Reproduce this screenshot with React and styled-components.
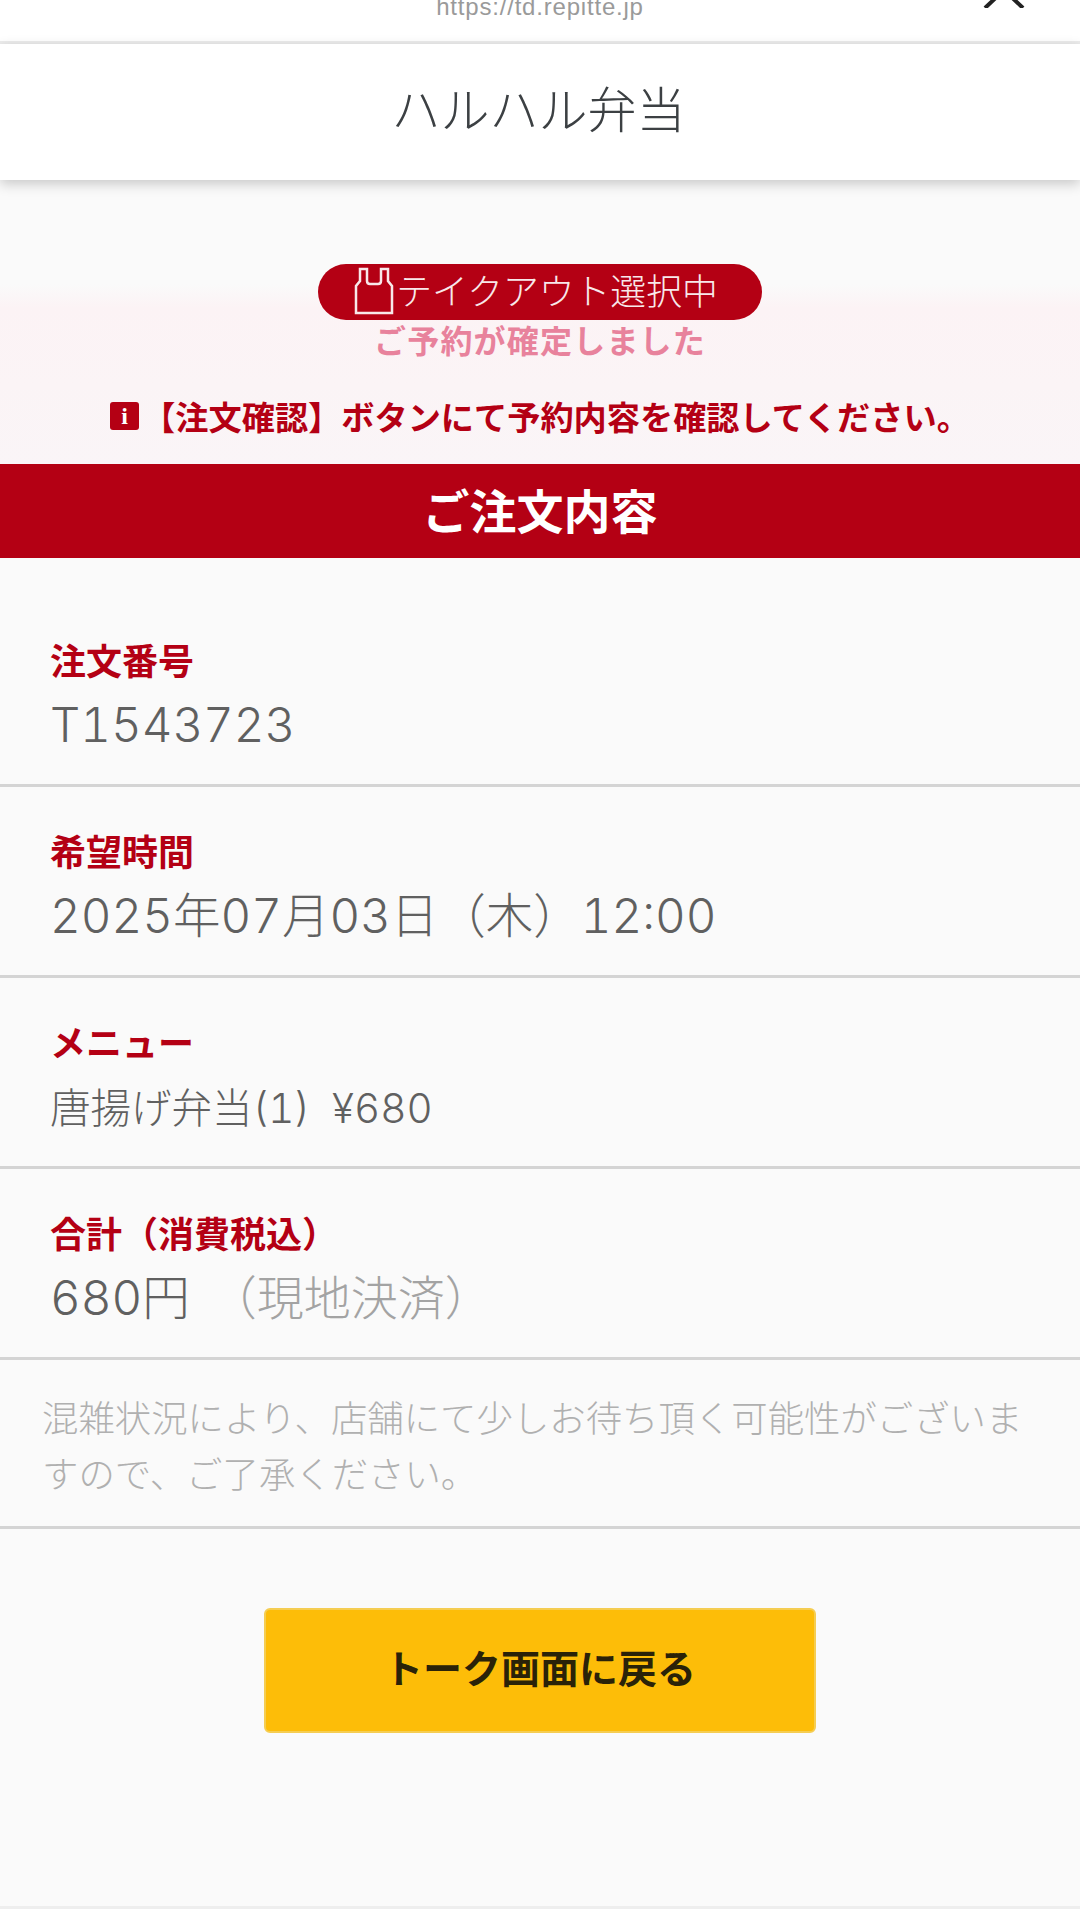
import React from "react";
import styled, { createGlobalStyle } from "styled-components";

const FONT = `"Noto Sans CJK JP", "Liberation Sans", sans-serif`;
const VALUE_FONT = `Inter, "Noto Sans CJK JP", sans-serif`;
const RED = "#b40014";

const GlobalStyle = createGlobalStyle`
  html, body {
    margin: 0;
    padding: 0;
    background: #fafafa;
  }
  * {
    box-sizing: border-box;
  }
`;

const Page = styled.div`
  width: 1080px;
  height: 1920px;
  overflow: hidden;
  display: flex;
  flex-direction: column;
  background: #fafafa;
  font-family: ${FONT};
`;

const BrowserBar = styled.div`
  height: 44px;
  background: #fff;
  border-bottom: 3px solid #ececec;
  display: flex;
  justify-content: center;
  position: relative;
  overflow: hidden;
`;

const UrlText = styled.div`
  font-family: "Liberation Sans", sans-serif;
  font-size: 24px;
  line-height: 24px;
  margin-top: -5px;
  letter-spacing: 0.8px;
  color: #9a9a9a;
`;

const CloseMark = styled.svg`
  position: absolute;
  right: 54px;
  top: -18px;
  width: 44px;
  height: 26px;
`;

const Header = styled.header`
  height: 136px;
  flex-shrink: 0;
  padding: 0 3px 11px 0;
  background: #fff;
  display: flex;
  align-items: center;
  justify-content: center;
  box-shadow: 0 4px 12px rgba(0, 0, 0, 0.2);
  position: relative;
  z-index: 1;
  font-size: 49px;
  font-weight: 300;
  color: #3c4043;
`;

const StatusArea = styled.section`
  height: 284px;
  flex-shrink: 0;
  padding-top: 84px;
  display: flex;
  flex-direction: column;
  align-items: center;
  background: linear-gradient(
    to bottom,
    #fafafa 0,
    #fafafa 104px,
    #fcf3f5 128px,
    #faf5f7 100%
  );
`;

const Pill = styled.div`
  width: 444px;
  height: 56px;
  border-radius: 28px;
  background: ${RED};
  color: #f8e8ea;
  display: flex;
  align-items: center;
  justify-content: center;
  gap: 2px;
  font-size: 35.8px;
  font-weight: 300;
  line-height: 1;
  padding-bottom: 4px;
  padding-right: 8px;
`;

const BagIcon = styled.svg`
  width: 40px;
  height: 48px;
  flex-shrink: 0;
  margin-bottom: -2px;
`;

const Confirmed = styled.div`
  margin-top: -2px;
  font-size: 32px;
  line-height: 42px;
  font-weight: 700;
  letter-spacing: 1.2px;
  color: #e8829c;
`;

const Notice = styled.div`
  margin-top: 34px;
  display: flex;
  align-items: center;
  font-size: 33.2px;
  line-height: 44px;
  font-weight: 700;
  color: ${RED};
  white-space: nowrap;
`;

const InfoBadge = styled.span`
  width: 29px;
  height: 28px;
  border-radius: 3px;
  background: ${RED};
  color: #fff;
  font-family: "Liberation Serif", serif;
  font-size: 24px;
  font-weight: 700;
  line-height: 28px;
  text-align: center;
  margin-right: 3px;
`;

const Band = styled.h2`
  margin: 0;
  height: 94px;
  flex-shrink: 0;
  padding-bottom: 5px;
  background: ${RED};
  color: #fff;
  display: flex;
  align-items: center;
  justify-content: center;
  font-size: 47px;
  font-weight: 700;
`;

const OrderList = styled.div`
  padding-top: 38px;
  display: flex;
  flex-direction: column;
`;

const Row = styled.div`
  height: 191px;
  padding: 39px 50px 0;
  border-bottom: 3px solid #d4d4d4;
`;

const Label = styled.div`
  font-size: 36px;
  line-height: 48px;
  font-weight: 700;
  color: ${RED};
`;

const Value = styled.div`
  margin-top: ${(p) => (p.$small ? "12px" : "10px")};
  font-family: ${VALUE_FONT};
  font-size: ${(p) => (p.$small ? "40.5px" : "47.5px")};
  font-variant-numeric: tabular-nums;
  line-height: 64px;
  font-weight: 300;
  color: #606060;
  white-space: pre;
`;

const Muted = styled.span`
  margin-left: 20px;
  font-size: 47px;
  color: #a3a3a3;
`;

const Note = styled.div`
  height: 169px;
  padding: 28px 40px 0 42px;
  border-bottom: 3px solid #d4d4d4;
  font-size: 36.4px;
  line-height: 56px;
  font-weight: 300;
  color: #b0b0b0;
`;

const ButtonWrap = styled.div`
  display: flex;
  justify-content: center;
  padding-top: 79px;
`;

const BackButton = styled.button`
  width: 552px;
  height: 125px;
  padding-bottom: 10px;
  border: 2px solid #f5cd52;
  border-radius: 6px;
  background: #fdbd08;
  color: #2a2208;
  font-family: ${FONT};
  font-size: 39px;
  font-weight: 700;
`;

const Spacer = styled.div`
  flex: 1;
`;

const BottomBar = styled.div`
  height: 14px;
  flex-shrink: 0;
  background: #fff;
  border-top: 3px solid #eeeeee;
`;

const rows = [
  { label: "注文番号", value: "T1543723" },
  { label: "希望時間", value: "2025年07月03日（木）12:00" },
  { label: "メニュー", value: "唐揚げ弁当(1)  ¥680", small: true },
  { label: "合計（消費税込）", value: "680円", muted: "（現地決済）" },
];

export default function App() {
  return (
    <Page>
      <GlobalStyle />
      <BrowserBar>
        <UrlText>https://td.repitte.jp</UrlText>
        <CloseMark viewBox="0 0 44 26">
          <path d="M22 8 L3 26 M22 8 L41 26" stroke="#222" strokeWidth="4" fill="none" />
        </CloseMark>
      </BrowserBar>
      <Header>ハルハル弁当</Header>
      <StatusArea>
        <Pill>
          <BagIcon viewBox="0 0 40 48">
            <path
              d="M2 46 V19 L6 14 V2 H13 V14 Q13 17 16 17 H24 Q27 17 27 14 V2 H34 V14 L38 19 V46 Z"
              stroke="#f8e8ea"
              strokeWidth="2.5"
              fill="none"
            />
          </BagIcon>
          テイクアウト選択中
        </Pill>
        <Confirmed>ご予約が確定しました</Confirmed>
        <Notice>
          <InfoBadge>i</InfoBadge>
          【注文確認】ボタンにて予約内容を確認してください。
        </Notice>
      </StatusArea>
      <Band>ご注文内容</Band>
      <OrderList>
        {rows.map((row) => (
          <Row key={row.label}>
            <Label>{row.label}</Label>
            <Value $small={row.small}>
              {row.value}
              {row.muted && <Muted>{row.muted}</Muted>}
            </Value>
          </Row>
        ))}
        <Note>混雑状況により、店舗にて少しお待ち頂く可能性がございますので、ご了承ください。</Note>
      </OrderList>
      <ButtonWrap>
        <BackButton>トーク画面に戻る</BackButton>
      </ButtonWrap>
      <Spacer />
      <BottomBar />
    </Page>
  );
}
